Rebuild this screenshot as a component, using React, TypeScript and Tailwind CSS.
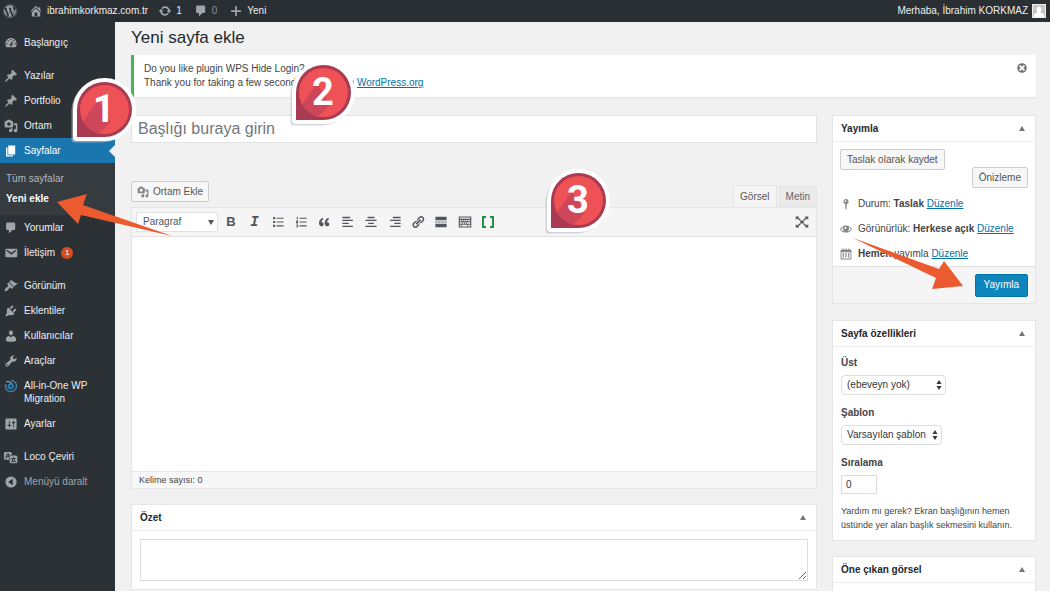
import type { ReactNode } from "react";
import { FaWordpress } from "react-icons/fa";

const ICONS = {
  home: "M16 8.5l1.53 1.53-1.06 1.06L10 4.6l-6.47 6.49-1.06-1.06L10 2.5l4 4v-2h2v4zm-6-2.46l6 5.99V18H4v-5.97zM12 17v-5H8v5h4z",
  update:
    "M10.2 3.28c3.53 0 6.43 2.61 6.92 6h2.08l-3.5 4-3.5-4h2.32c-.45-1.97-2.21-3.45-4.32-3.45-1.45 0-2.73.71-3.54 1.78L4.95 5.66C6.23 4.2 8.11 3.28 10.2 3.28zm-.4 13.44c-3.52 0-6.43-2.61-6.92-6H.8l3.5-4c1.17 1.33 2.33 2.67 3.5 4H5.48c.45 1.97 2.21 3.45 4.32 3.45 1.45 0 2.73-.71 3.54-1.78l1.71 1.95c-1.28 1.46-3.15 2.38-5.25 2.38z",
  plus: "M17 9v2.4h-5.8V17H8.8v-5.6H3V9h5.8V3h2.4v6z",
  dashboard:
    "M3.76 16h12.48c1.1-1.37 1.76-3.11 1.76-5 0-4.42-3.58-8-8-8s-8 3.58-8 8c0 1.89.66 3.63 1.76 5zM10 4c.55 0 1 .45 1 1s-.45 1-1 1-1-.45-1-1 .45-1 1-1zM6 6c.55 0 1 .45 1 1s-.45 1-1 1-1-.45-1-1 .45-1 1-1zm8 0c.55 0 1 .45 1 1s-.45 1-1 1-1-.45-1-1 .45-1 1-1zm-5.37 5.55L12 7v6c0 1.1-.9 2-2 2s-2-.9-2-2c0-.57.24-1.08.63-1.45zM4 10c.55 0 1 .45 1 1s-.45 1-1 1-1-.45-1-1 .45-1 1-1zm12 0c.55 0 1 .45 1 1s-.45 1-1 1-1-.45-1-1 .45-1 1-1zm-5 3c0-.55-.45-1-1-1s-1 .45-1 1 .45 1 1 1 1-.45 1-1z",
  pin: "M10.44 3.02l1.82-1.82 6.36 6.35-1.83 1.82c-1.05-.68-2.48-.57-3.41.36l-.75.75c-.92.93-1.04 2.35-.35 3.41l-1.83 1.82-2.41-2.41-2.8 2.79c-.42.42-3.38 2.71-3.8 2.29s1.86-3.39 2.28-3.81l2.79-2.79L4.1 9.36l1.83-1.82c1.05.69 2.48.57 3.4-.36l.75-.75c.93-.92 1.05-2.35.36-3.41z",
  media:
    "M13 11V4c0-.55-.45-1-1-1h-1.67L9 1H5L3.67 3H2c-.55 0-1 .45-1 1v7c0 .55.45 1 1 1h10c.55 0 1-.45 1-1zM7 4.5c1.38 0 2.5 1.12 2.5 2.5S8.38 9.5 7 9.5 4.5 8.38 4.5 7 5.62 4.5 7 4.5zM14 6h5v10.5c0 1.38-1.12 2.5-2.5 2.5S14 17.88 14 16.5s1.12-2.5 2.5-2.5c.17 0 .34.02.5.05V9h-3V6zm-4 8.05V13h2v3.5c0 1.38-1.12 2.5-2.5 2.5S7 17.88 7 16.5 8.12 14 9.5 14c.17 0 .34.02.5.05z",
  page: "M6 15V2h10v13H6zm-1 1h8v2H3V5h2v11z",
  comment:
    "M5 2h9c1.1 0 2 .9 2 2v7c0 1.1-.9 2-2 2h-2l-5 5v-5H5c-1.1 0-2-.9-2-2V4c0-1.1.9-2 2-2z",
  email:
    "M3.87 4h13.25C18.37 4 19 4.59 19 5.79v8.42c0 1.19-.63 1.79-1.88 1.79H3.87c-1.25 0-1.88-.6-1.88-1.79V5.79c0-1.2.63-1.79 1.88-1.79zm6.62 8.6l6.74-5.53c.24-.2.43-.66.13-1.07-.29-.41-.82-.42-1.17-.17l-5.7 3.86L4.8 5.83c-.35-.25-.88-.24-1.17.17-.3.41-.11.87.13 1.07z",
  brush:
    "M14.48 11.06L7.41 3.99l1.5-1.5c.5-.56 2.3-.47 3.51.32 1.21.8 1.43 1.28 2.91 2.1 1.18.64 2.45 1.26 4.45.85zm-.71.71L6.7 4.7 4.93 6.47c-.39.39-.39 1.02 0 1.41l1.06 1.06c.39.39.39 1.03 0 1.42-.6.6-1.43 1.11-2.21 1.69-.35.26-.7.53-1.01.84C1.43 14.23.4 16.08 1.4 17.07c.99 1 2.84-.03 4.18-1.36.31-.31.58-.66.85-1.02.57-.78 1.08-1.61 1.69-2.21.39-.39 1.02-.39 1.41 0l1.06 1.06c.39.39 1.02.39 1.41 0z",
  plug: "M13.11 4.36L9.87 7.6 8 5.73l3.24-3.24c.35-.34 1.05-.2 1.56.32.52.51.66 1.21.31 1.55zm-8 1.77l.91-1.12 9.01 9.01-1.19.84c-.71.71-2.63 1.16-3.82 1.16H6.14L4.9 17.26c-.59.59-1.54.59-2.12 0-.59-.58-.59-1.53 0-2.12l1.24-1.24v-3.88c0-1.13.4-3.19 1.09-3.89zm7.26 3.97l3.24-3.24c.34-.35 1.04-.21 1.55.31.52.51.66 1.21.31 1.55l-3.24 3.25z",
  user: "M10 9.25c-2.27 0-2.73-3.44-2.73-3.44C7 4.02 7.82 2 9.97 2c2.16 0 2.98 2.02 2.71 3.81 0 0-.41 3.44-2.68 3.44zm0 2.57L12.72 10c2.39 0 4.52 2.33 4.52 4.53v2.49s-3.65 1.13-7.24 1.13c-3.65 0-7.24-1.13-7.24-1.13v-2.49c0-2.25 1.94-4.48 4.47-4.48z",
  wrench:
    "M16.68 9.77c-1.34 1.34-3.3 1.67-4.95.99l-5.41 6.52c-.99.99-2.59.99-3.58 0s-.99-2.59 0-3.57l6.52-5.42c-.68-1.65-.35-3.61.99-4.95 1.28-1.28 3.12-1.62 4.72-1.06l-2.89 2.89 2.82 2.82 2.86-2.87c.53 1.58.18 3.39-1.08 4.65zM3.81 16.21c.4.39 1.04.39 1.43 0 .4-.4.4-1.04 0-1.43-.39-.4-1.03-.4-1.43 0-.39.39-.39 1.03 0 1.43z",
  sliders:
    "M18 16V4c0-1.1-.9-2-2-2H4c-1.1 0-2 .9-2 2v12c0 1.1.9 2 2 2h12c1.1 0 2-.9 2-2zM8 11h1c.55 0 1 .45 1 1s-.45 1-1 1H8v1.5c0 .28-.22.5-.5.5s-.5-.22-.5-.5V13H6c-.55 0-1-.45-1-1s.45-1 1-1h1V5.5c0-.28.22-.5.5-.5s.5.22.5.5V11zm5-2h-1c-.55 0-1-.45-1-1s.45-1 1-1h1V5.5c0-.28.22-.5.5-.5s.5.22.5.5V7h1c.55 0 1 .45 1 1s-.45 1-1 1h-1v5.5c0 .28-.22.5-.5.5s-.5-.22-.5-.5V9z",
  translate:
    "M11 7H9.49c-.63 0-1.25.3-1.59.7L7 5H4.13l-2.39 7h1.69l.74-2H7v4H2c-1.1 0-2-.9-2-2V5c0-1.1.9-2 2-2h7c1.1 0 2 .9 2 2v2zM6.51 9H4.49l1-2.93zM10 8h7c1.1 0 2 .9 2 2v7c0 1.1-.9 2-2 2h-7c-1.1 0-2-.9-2-2v-7c0-1.1.9-2 2-2zm7.25 5v-1.08h-3.17V9.75h-1.16v2.17H9.75V13h1.28c.11.85.56 1.85 1.28 2.62-.87.36-1.89.62-2.31.62-.01.02.22.97.2 1.46.84 0 2.21-.5 3.28-1.15 1.09.65 2.48 1.15 3.34 1.15-.02-.49.2-1.44.2-1.46-.43 0-1.49-.27-2.38-.63.7-.77 1.14-1.77 1.25-2.61h1.36zm-3.81 1.93c-.5-.46-.85-1.13-1.01-1.93h2.09c-.17.8-.51 1.47-1 1.93l-.04.03s-.03-.02-.04-.03z",
  collapse: "M10 2a8 8 0 1 0 0 16 8 8 0 0 0 0-16zm2.5 12.5L6 10l6.500-4.500z",
  ul: "M3 3h3v3H3zM8 4h10v1.500H8zM3 8.500h3v3H3zM8 9.300h10v1.500H8zM3 14h3v3H3zM8 14.800h10v1.500H8z",
  ol: "M4 2.500h1.500v4H4zM8 4h10v1.500H8zM3 8h3v1.500H4.500v1H6V12H3zM8 9.300h10v1.500H8zM3 13.500h3v4H3v-1h1.500v-2H3zM8 14.800h10v1.500H8z",
  quote:
    "M9.49 13.22c0-.74-.2-1.38-.61-1.9-.62-.78-1.83-.88-2.53-.72-.29-1.65 1.11-3.75 2.92-4.65L7.88 4c-2.73 1.3-5.42 4.28-4.96 8.05C3.21 14.43 4.59 16 6.54 16c.85 0 1.56-.25 2.12-.75s.83-1.18.83-2.03zm8.05 0c0-.74-.2-1.38-.61-1.9-.63-.78-1.83-.88-2.53-.72-.29-1.65 1.11-3.75 2.92-4.65L15.93 4c-2.73 1.3-5.41 4.28-4.95 8.05.29 2.38 1.66 3.95 3.61 3.95.85 0 1.56-.25 2.12-.75s.83-1.18.83-2.03z",
  left: "M2 2.500h11v2H2zM2 6.700h15v2H2zM2 11h9v2H2zM2 15.200h15v2H2z",
  center: "M5 2.500h10v2H5zM2 6.700h16v2H2zM6 11h8v2H6zM2 15.200h16v2H2z",
  right: "M7 2.500h11v2H7zM3 6.700h15v2H3zM9 11h9v2H9zM3 15.200h15v2H3z",
  link: "M17.74 2.76c1.68 1.69 1.68 4.41 0 6.1l-1.53 1.52c-1.12 1.12-2.7 1.47-4.14 1.09l2.62-2.61.76-.77.76-.76c.84-.84.84-2.2 0-3.04-.84-.85-2.2-.85-3.04 0l-.77.76-3.38 3.38c-.37-1.44-.02-3.02 1.1-4.14l1.52-1.53c1.69-1.68 4.42-1.68 6.1 0zM8.59 13.43l5.34-5.34c.42-.42.42-1.1 0-1.52-.44-.43-1.13-.39-1.53 0l-5.33 5.34c-.42.42-.42 1.1 0 1.52.44.43 1.13.39 1.52 0zm-.76 2.29l4.14-4.15c.38 1.44.03 3.02-1.09 4.14l-1.52 1.53c-1.69 1.68-4.41 1.68-6.1 0-1.68-1.68-1.68-4.42 0-6.1l1.53-1.52c1.12-1.12 2.7-1.47 4.14-1.1l-4.14 4.15c-.85.84-.85 2.2 0 3.05.84.84 2.2.84 3.04 0z",
  more: "M2 2.500h16v5H2zM2 9.200h3v1.600H2zM6.300 9.200h3v1.600h-3zM10.600 9.200h3v1.600h-3zM15 9.200h3v1.600h-3zM2 12.500h16v5H2z",
  kitchensink:
    "M1 2h18v16H1zM2.500 3.500v2h15v-2zM2.500 7v2h2V7zM5.500 7v2h2V7zM8.500 7v2h2V7zM11.500 7v2h2V7zM14.500 7v2h3V7zM2.500 10.500v2h3v-2zM6.500 10.500v2h2v-2zM9.500 10.500v2h2v-2zM12.500 10.500v2h5v-2zM2.500 14v2.500h2V14zM5.500 14v2.500h8V14zM14.500 14v2.500h3V14z",
  expand:
    "M1 2h5L4.700 3.500l3.600 3.300L7 8.200 3.300 4.900 2 6.500H1zM19 2h-5l1.300 1.500-3.600 3.300L13 8.200l3.700-3.300L18 6.500h1zM1 18h5l-1.300-1.500 3.600-3.300L7 11.800l-3.700 3.300L2 13.500H1zM19 18h-5l1.300-1.500-3.600-3.300 1.300-1.400 3.700 3.300 1.300-1.600h1zM7.500 8h5v4h-5z",
  dismiss:
    "M10 2a8 8 0 1 0 0 16 8 8 0 0 0 0-16zm5 11l-2 2-3-3-3 3-2-2 3-3-3-3 2-2 3 3 3-3 2 2-3 3z",
  key: "M10 1.500a4.500 4.500 0 0 0-1.500 8.700L9.200 19h1.600l.7-8.800A4.500 4.500 0 0 0 10 1.500zM9.200 3.600a1.500 1.500 0 1 1 0 3 1.500 1.500 0 0 1 0-3z",
  eye: "M10 4C5.500 4 2 7 0 10.300 2 13.500 5.500 16 10 16s8-2.500 10-5.700C18 7 14.500 4 10 4zm0 10.500c-3.600 0-6.500-1.700-8.200-4.200 1-1.600 2.500-3 4.300-3.900a5 5 0 1 0 7.800 0c1.800.9 3.300 2.300 4.300 3.900-1.700 2.500-4.600 4.200-8.200 4.200zM9 6.500a1.800 1.800 0 1 1 0 3.600 1.800 1.800 0 0 1 0-3.600z",
  calendar:
    "M4 1h2v2h3V1h2v2h3V1h2v2h3v16H1V3h3zM2.500 7v10.500h15V7zM4.500 8.500h2v7.500h-2zM9 8.500h2v7.500H9zM13.500 8.500h2v7.500h-2z",
};

type IconName = keyof typeof ICONS;

const Icon = ({ name, className = "size-3.5" }: { name: IconName; className?: string }) => (
  <svg viewBox="0 0 20 20" fill="currentColor" fillRule="evenodd" className={`shrink-0 ${className}`} aria-hidden="true">
    <path d={ICONS[name]} />
  </svg>
);

const MigrationIcon = () => (
  <svg viewBox="0 0 20 20" fill="none" className="size-3.5 shrink-0" aria-hidden="true">
    <path d="M10 2a8 8 0 1 1-7.500 5" stroke="#4b7fa3" strokeWidth="2" />
    <path d="M3 4c3-1 8 0 9 4" stroke="#8fb4cc" strokeWidth="1.500" />
    <circle cx="9.500" cy="10.500" r="4.500" fill="#1b82b8" />
    <circle cx="10" cy="10.500" r="1.600" fill="#23282d" />
  </svg>
);

const MenuItem = ({ icon, label, badge }: { icon: IconName; label: string; badge?: string }) => (
  <li>
    <a href="#" className="flex h-[25px] items-center gap-1.5 pl-1">
      <Icon name={icon} className="size-3.5 text-[#a0a5aa]" />
      {label}
      {badge && (
        <span className="flex size-3 items-center justify-center rounded-full bg-[#d54e21] text-[8px] text-white">
          {badge}
        </span>
      )}
    </a>
  </li>
);

const Sidebar = () => (
  <nav className="w-[115px] shrink-0 bg-[#2c3136] pt-2 text-[#eee]">
    <ul>
      <MenuItem icon="dashboard" label="Başlangıç" />
    </ul>
    <ul className="mt-2">
      <MenuItem icon="pin" label="Yazılar" />
      <MenuItem icon="pin" label="Portfolio" />
      <MenuItem icon="media" label="Ortam" />
      <li>
        <a href="#" className="relative flex h-[25px] items-center gap-1.5 bg-[#1a76ae] pl-1 text-white">
          <Icon name="page" />
          Sayfalar
          <span className="absolute right-0 border-y-6 border-r-6 border-y-transparent border-r-[#f1f1f1]" />
        </a>
        <ul className="bg-[#363b40] py-1.5 pl-1.5 text-[#b4b9be]">
          <li><a href="#" className="flex h-5 items-center">Tüm sayfalar</a></li>
          <li><a href="#" className="flex h-5 items-center font-bold text-white">Yeni ekle</a></li>
        </ul>
      </li>
      <MenuItem icon="comment" label="Yorumlar" />
      <MenuItem icon="email" label="İletişim" badge="1" />
    </ul>
    <ul className="mt-2">
      <MenuItem icon="brush" label="Görünüm" />
      <MenuItem icon="plug" label="Eklentiler" />
      <MenuItem icon="user" label="Kullanıcılar" />
      <MenuItem icon="wrench" label="Araçlar" />
      <li>
        <a href="#" className="flex h-[38px] gap-1.5 pt-1.5 pl-1 leading-[13px]">
          <MigrationIcon />
          All-in-One WP Migration
        </a>
      </li>
      <MenuItem icon="sliders" label="Ayarlar" />
    </ul>
    <ul className="mt-2">
      <MenuItem icon="translate" label="Loco Çeviri" />
    </ul>
    <button type="button" className="flex h-[25px] items-center gap-1.5 pl-1 text-[#a0a5aa]">
      <Icon name="collapse" />
      Menüyü daralt
    </button>
  </nav>
);

const AdminBar = () => (
  <header className="flex h-[22px] shrink-0 items-center bg-[#2a2f34] pr-1 pl-[3px] text-[#eee]">
    <a href="#" aria-label="WordPress" className="text-[#a0a5aa]">
      <FaWordpress className="size-3.5" />
    </a>
    <a href="#" className="ml-3 flex items-center gap-1">
      <Icon name="home" className="size-3.5 text-[#a0a5aa]" />
      ibrahimkorkmaz.com.tr
    </a>
    <a href="#" className="ml-2.5 flex items-center gap-1">
      <Icon name="update" className="size-3.5 text-[#a0a5aa]" />1
    </a>
    <a href="#" className="ml-3 flex items-center gap-1 text-[#8a8f94]">
      <Icon name="comment" className="size-3.5 text-[#a0a5aa]" />0
    </a>
    <a href="#" className="ml-3 flex items-center gap-1">
      <Icon name="plus" className="size-3.5 text-[#a0a5aa]" />
      Yeni
    </a>
    <a href="#" className="ml-auto flex items-center gap-1">
      Merhaba, İbrahim KORKMAZ
      <svg viewBox="0 0 14 14" className="size-3.5" aria-hidden="true">
        <rect width="14" height="14" fill="#eee" />
        <rect x="1" y="1" width="12" height="12" fill="#c5c5c5" />
        <path d="M7 2.500a2.600 2.900 0 0 1 1.400 5.200c0 1 .8 1.300 2.800 1.900.7.300.8 1.200.8 3.400H2c0-2.200.1-3.100.8-3.400 2-.6 2.800-.9 2.800-1.900A2.600 2.900 0 0 1 7 2.500z" fill="#fff" />
      </svg>
    </a>
  </header>
);

const PostBox = ({ title, className = "", children }: { title: string; className?: string; children?: ReactNode }) => (
  <section className={`border border-[#e5e5e5] bg-white ${className}`}>
    <div className="flex h-[26px] items-center justify-between border-b border-[#eee] pr-2.5 pl-2">
      <h2 className="font-bold text-[#23282d]">{title}</h2>
      <button type="button" aria-label={`${title} aç/kapat`} className="border-x-3 border-b-5 border-x-transparent border-b-[#72777c]" />
    </div>
    {children}
  </section>
);

const TOOLS: { icon: IconName; label: string }[] = [
  { icon: "ul", label: "Madde imli liste" },
  { icon: "ol", label: "Numaralı liste" },
  { icon: "quote", label: "Alıntı" },
  { icon: "left", label: "Sola hizala" },
  { icon: "center", label: "Ortala" },
  { icon: "right", label: "Sağa hizala" },
  { icon: "link", label: "Bağlantı" },
  { icon: "more", label: "Devamı" },
  { icon: "kitchensink", label: "Araç çubuğu" },
];

const Editor = () => (
  <div>
    <div className="flex items-end justify-between">
      <button type="button" className="mb-[5px] flex h-[21px] items-center gap-1 rounded-xs border border-[#ccc] bg-[#f7f7f7] px-[5px] text-[#555]">
        <Icon name="media" className="size-3 text-[#82878c]" />
        Ortam Ekle
      </button>
      <div className="flex items-end gap-0.5 text-[#555]">
        <button type="button" className="h-[22px] border border-b-0 border-[#e5e5e5] bg-[#f5f5f6] px-1.5">Görsel</button>
        <button type="button" className="h-[21px] border border-b-0 border-[#e5e5e5] bg-[#ebebeb] px-1.5 text-[#666]">Metin</button>
      </div>
    </div>
    <div className="border border-[#e5e5e5] bg-white">
      <div className="flex h-[29px] items-center border-b border-[#e2e2e2] bg-[#f5f5f6] pr-[7px] pl-1 text-[#50565c]">
        <div className="relative mr-[5px]">
          <select aria-label="Biçim" className="h-5 w-[82px] appearance-none border border-[#e2e2e2] bg-white pl-1.5">
            <option>Paragraf</option>
          </select>
          <span className="pointer-events-none absolute top-2 right-1 border-x-3 border-t-5 border-x-transparent border-t-[#50565c]" />
        </div>
        <div className="flex w-[273px] items-center justify-between">
          <button type="button" aria-label="Kalın" className="w-4 text-[13px] font-bold">B</button>
          <button type="button" aria-label="İtalik" className="w-4 font-['Liberation_Mono'] text-[14px] font-bold italic">I</button>
          {TOOLS.map((tool) => (
            <button key={tool.icon} type="button" aria-label={tool.label} className="flex w-4 justify-center">
              <Icon name={tool.icon} />
            </button>
          ))}
          <button type="button" aria-label="Kısa kod" className="flex w-4 justify-center">
            <svg viewBox="0 0 14 14" className="size-3.5" fill="none" stroke="#1f9245" strokeWidth="2" aria-hidden="true">
              <path d="M5 2H2v10h3M9 2h3v10H9" />
            </svg>
          </button>
        </div>
        <button type="button" aria-label="Tam ekran" className="ml-auto">
          <Icon name="expand" />
        </button>
      </div>
      <textarea aria-label="Sayfa içeriği" className="block h-[234px] w-full resize-none p-2 outline-none" />
      <div className="flex h-[17px] items-center border-t border-[#e5e5e5] bg-[#f7f7f7] pl-[7px] text-[9px] text-[#444]">
        Kelime sayısı: 0
      </div>
    </div>
  </div>
);

const StatusRow = ({ icon, children }: { icon: IconName; children: ReactNode }) => (
  <p className="flex h-[25px] items-center gap-1.5">
    <Icon name={icon} className="size-3 text-[#82878c]" />
    <span>{children}</span>
  </p>
);

const EditLink = () => (
  <a href="#" className="text-[#0073aa] underline">Düzenle</a>
);

const PublishBox = () => (
  <PostBox title="Yayımla">
    <div className="px-[7px] pt-[7px]">
      <button type="button" className="block h-[21px] rounded-xs border border-[#ccc] bg-[#f7f7f7] px-1.5 text-[#555]">
        Taslak olarak kaydet
      </button>
      <div className="-mt-[3px] flex justify-end">
        <button type="button" className="h-[21px] rounded-xs border border-[#ccc] bg-[#f7f7f7] px-1.5 text-[#555]">
          Önizleme
        </button>
      </div>
      <div className="pt-[3px]">
        <StatusRow icon="key">Durum: <b>Taslak</b> <EditLink /></StatusRow>
        <StatusRow icon="eye">Görünürlük: <b>Herkese açık</b> <EditLink /></StatusRow>
        <StatusRow icon="calendar"><b>Hemen</b> yayımla <EditLink /></StatusRow>
      </div>
    </div>
    <div className="flex h-[37px] items-center justify-end border-t border-[#e2e2e2] bg-[#f5f5f5] pr-[7px]">
      <button type="button" className="h-[23px] rounded-xs border border-[#0076ab] bg-[#0e85bd] px-2 text-white">Yayımla</button>
    </div>
  </PostBox>
);

const SelectField = ({ id, label, value, className }: { id: string; label: string; value: string; className: string }) => (
  <div className="mb-2.5">
    <label htmlFor={id} className="mb-[5px] block h-[15px] leading-[15px] font-bold">{label}</label>
    <div className={`relative ${className}`}>
      <select id={id} className="block h-5 w-full appearance-none rounded-sm border border-[#ddd] bg-white pl-[5px] text-[#32373c]">
        <option>{value}</option>
      </select>
      <svg viewBox="0 0 6 10" className="pointer-events-none absolute top-[5px] right-1 h-2.5 w-1.5" fill="#32373c" aria-hidden="true">
        <path d="M3 0l2.500 4h-5zM3 10l2.500-4h-5z" />
      </svg>
    </div>
  </div>
);

const PageAttributes = () => (
  <PostBox title="Sayfa özellikleri" className="mt-4">
    <div className="px-2 pt-2 pb-2">
      <SelectField id="parent" label="Üst" value="(ebeveyn yok)" className="w-[105px]" />
      <SelectField id="template" label="Şablon" value="Varsayılan şablon" className="w-[101px]" />
      <label htmlFor="order" className="mb-[5px] block h-[15px] leading-[15px] font-bold">Sıralama</label>
      <input id="order" defaultValue="0" className="block h-[19px] w-9 border border-[#ddd] px-1 text-[#32373c]" />
      <p className="mt-2.5 text-[9px] leading-[14px]">
        Yardım mı gerek? Ekran başlığının hemen üstünde yer alan başlık sekmesini kullanın.
      </p>
    </div>
  </PostBox>
);

const Marker = ({ n, className }: { n: number; className: string }) => (
  <div className={`pointer-events-none absolute z-10 h-[70px] w-[68px] ${className}`}>
    <svg viewBox="0 0 68 70" className="size-full" aria-hidden="true">
      <path d="M5 62V33a27.500 27.500 0 1 1 27.500 29z" fill="#b9bec6" stroke="#b9bec6" strokeWidth="7" strokeLinejoin="round" opacity="0.6" />
      <path d="M7 60V32.500A27.500 27.500 0 1 1 34.500 60z" fill="#fff" stroke="#fff" strokeWidth="8" strokeLinejoin="round" />
      <path d="M7 60V32.500A27.500 27.500 0 1 1 34.500 60z" fill="#a93a51" />
      <circle cx="34.500" cy="32.500" r="24.500" fill="#ee5256" />
      <path d="M28 23L13 44.500A24.500 24.500 0 0 0 29 56.400L41 45z" fill="#cd465a" />
    </svg>
    <span className="absolute inset-x-0 top-3 text-center font-['Roboto',sans-serif] text-[38px] leading-10 font-bold text-white">
      {n}
    </span>
  </div>
);

const App = () => {
  return (
    <div className="relative flex h-screen flex-col overflow-hidden bg-[#f1f1f1] font-['Liberation_Sans',Arial,sans-serif] text-[10px] leading-[14px] text-[#444]">
      <AdminBar />
      <div className="flex min-h-0 flex-1">
        <Sidebar />
        <main className="min-w-0 flex-1 pt-1.5 pr-3.5 pl-4">
          <h1 className="text-[17px] leading-5 text-[#23282d]">Yeni sayfa ekle</h1>

          {/* Plugin notice */}
          <div className="mt-[7px] flex h-[42px] items-start justify-between border-l-3 border-[#46b450] bg-white pt-[7px] pr-2 pl-2.5 shadow-xs">
            <p>
              Do you like plugin WPS Hide Login?
              <br />
              Thank you for taking a few seconds to rate it on{" "}
              <a href="#" className="text-[#0073aa] underline">WordPress.org</a>
            </p>
            <button type="button" aria-label="Kapat" className="text-[#72777c]">
              <Icon name="dismiss" className="size-3" />
            </button>
          </div>

          <div className="mt-[18px] flex items-start gap-[15px]">
            <div className="min-w-0 flex-1">
              <input
                type="text"
                aria-label="Başlık"
                placeholder="Başlığı buraya girin"
                className="mb-[38px] block h-7 w-full border border-[#e2e2e2] bg-white px-1.5 text-[16px] placeholder:text-[#72777c]"
              />
              <Editor />
              <PostBox title="Özet" className="mt-[15px]">
                <div className="p-2">
                  <textarea aria-label="Özet" className="block h-[42px] w-full resize border border-[#ddd]" />
                </div>
              </PostBox>
            </div>
            <div className="w-[204px] shrink-0">
              <PublishBox />
              <PageAttributes />
              <PostBox title="Öne çıkan görsel" className="mt-[15px]">
                <div className="h-10" />
              </PostBox>
            </div>
          </div>
        </main>
      </div>

      {/* Tutorial callouts */}
      <Marker n={1} className="top-[77px] left-[70px]" />
      <Marker n={2} className="top-[60px] left-[289px]" />
      <Marker n={3} className="top-[168px] left-[544px]" />
      <svg viewBox="0 0 116 42" className="pointer-events-none absolute top-[194px] left-[57px] h-[42px] w-[116px]" fill="#ec5a2f" aria-hidden="true">
        <path d="M0 8L30 0l-4 11 89 31-91-21-3 9z" />
      </svg>
      <svg viewBox="0 0 112 52" className="pointer-events-none absolute top-[238px] right-[86px] h-[52px] w-[112px]" fill="#ec5a2f" aria-hidden="true">
        <path d="M1 0l86 31 5-8 19 25-31 3 4-11z" />
      </svg>
    </div>
  );
};

export default App;
